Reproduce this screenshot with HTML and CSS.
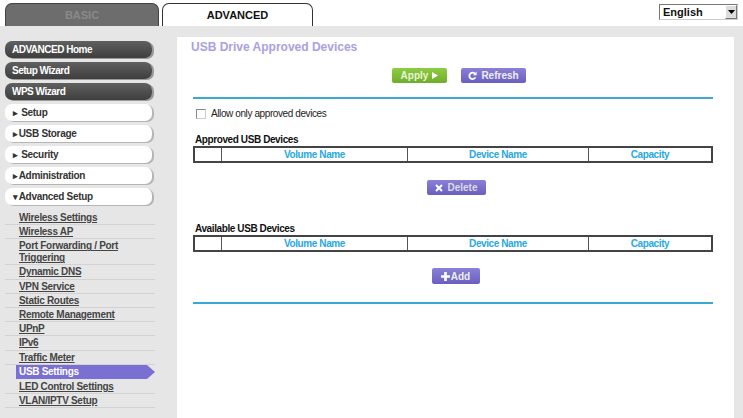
FILE: index.html
```html
<!DOCTYPE html>
<html>
<head>
<meta charset="utf-8">
<link rel="stylesheet" href="styles.css">
</head>
<body>
<div class="top">
  <div class="tab tab-basic">BASIC</div>
  <div class="tab tab-adv">ADVANCED</div>
  <div class="lang"><span>English</span><span class="lang-btn"><svg width="7" height="4" viewBox="0 0 7 4"><path d="M0 0h7L3.5 4z" fill="#000"/></svg></span></div>
</div>
<div class="main">
  <div class="side">
    <div class="dbtn">ADVANCED Home</div>
    <div class="dbtn">Setup Wizard</div>
    <div class="dbtn">WPS Wizard</div>
    <div class="wbtn"><span class="tri">&#9656;</span> Setup</div>
    <div class="wbtn"><span class="tri">&#9656;</span>USB Storage</div>
    <div class="wbtn"><span class="tri">&#9656;</span> Security</div>
    <div class="wbtn"><span class="tri">&#9656;</span>Administration</div>
    <div class="wbtn"><span class="tri">&#9662;</span>Advanced Setup</div>
    <ul class="sub">
      <li><a>Wireless Settings</a></li>
      <li><a>Wireless AP</a></li>
      <li class="two"><a>Port Forwarding / Port Triggering</a></li>
      <li><a>Dynamic DNS</a></li>
      <li><a>VPN Service</a></li>
      <li><a>Static Routes</a></li>
      <li><a>Remote Management</a></li>
      <li><a>UPnP</a></li>
      <li><a>IPv6</a></li>
      <li><a>Traffic Meter</a></li>
      <li class="active"><a>USB Settings</a></li>
      <li><a>LED Control Settings</a></li>
      <li><a>VLAN/IPTV Setup</a></li>
    </ul>
  </div>
  <div class="panel">
    <h1 class="title">USB Drive Approved Devices</h1>
    <div class="actions">
      <div class="btn green">Apply <svg width="6" height="7" viewBox="0 0 6 7"><path d="M0 0l6 3.5L0 7z" fill="#fff"/></svg></div>
      <div class="btn purple"><svg width="9" height="9" viewBox="0 0 10 10"><path d="M8 3.2A3.6 3.6 0 1 0 8.3 7" fill="none" stroke="#fff" stroke-width="2"/><path d="M9.6 0.6v4H5.6z" fill="#fff"/></svg> Refresh</div>
    </div>
    <div class="rule"></div>
    <label class="check"><span class="box"></span>Allow only approved devices</label>
    <div class="sect">Approved USB Devices</div>
    <table class="tbl">
      <tr><th class="c0"></th><th class="c1">Volume Name</th><th class="c2">Device Name</th><th class="c3">Capacity</th></tr>
    </table>
    <div class="center c-del"><div class="btn purple del"><svg width="8" height="8" viewBox="0 0 8 8"><path d="M1 1l6 6M7 1L1 7" stroke="#fff" stroke-width="2"/></svg> Delete</div></div>
    <div class="sect sect2">Available USB Devices</div>
    <table class="tbl">
      <tr><th class="c0"></th><th class="c1">Volume Name</th><th class="c2">Device Name</th><th class="c3">Capacity</th></tr>
    </table>
    <div class="center c-add"><div class="btn purple add"><svg width="9" height="9" viewBox="0 0 9 9"><path d="M4.5 0v9M0 4.5h9" stroke="#fff" stroke-width="2.6"/></svg>Add</div></div>
    <div class="rule rule2"></div>
  </div>
</div>
</body>
</html>
```
FILE: styles.css
```css
html, body { margin: 0; padding: 0; }
body {
  width: 743px;
  height: 418px;
  overflow: hidden;
  font-family: "Liberation Sans", Arial, sans-serif;
  background: #fff;
}
.top {
  height: 26px;
  display: flex;
  align-items: flex-end;
  padding-left: 5px;
  position: relative;
}
.tab {
  box-sizing: border-box;
  height: 23px;
  border-radius: 7px 7px 0 0;
  font-weight: bold;
  font-size: 11px;
  text-align: center;
  line-height: 22px;
}
.tab-basic {
  width: 154px;
  background: #6d6d6d;
  color: #8a8a8a;
  border: 1px solid #444;
  border-bottom: none;
}
.tab-adv {
  width: 151px;
  margin-left: 3px;
  background: #fff;
  color: #111;
  border: 1px solid #333;
  border-bottom: none;
}
.lang {
  position: absolute;
  left: 659px;
  top: 4px;
  width: 79px;
  height: 16px;
  box-sizing: border-box;
  border: 1px solid #777;
  border-right-color: #ccc;
  border-bottom-color: #ccc;
  font-size: 11px;
  font-weight: bold;
  color: #111;
  line-height: 14px;
  padding-left: 3px;
  display: flex;
  justify-content: space-between;
  background: #fff;
}
.lang-btn {
  width: 12px;
  height: 14px;
  background: #ddd;
  display: flex;
  align-items: center;
  justify-content: center;
  box-sizing: border-box;
  border: 1px solid #fff;
  border-right-color: #777;
  border-bottom-color: #777;
}
.main {
  display: flex;
  background: #e6e6e6;
  height: 392px;
}
.side {
  width: 163px;
  padding-top: 15px;
  box-sizing: border-box;
}
.dbtn, .wbtn {
  width: 147px;
  height: 17px;
  margin-left: 5px;
  margin-bottom: 4px;
  border-radius: 7px;
  box-sizing: border-box;
  font-size: 10px;
  font-weight: bold;
  line-height: 17px;
  padding-left: 7px;
  letter-spacing: -0.5px;
}
.dbtn {
  background: linear-gradient(#606060, #3e3e3e);
  color: #fff;
  box-shadow: 2px 1px 0 #9a9a9a;
}
.wbtn {
  background: #fff;
  color: #333;
  padding-left: 8px;
  box-shadow: 2px 1px 0 #b5b5b5;
  letter-spacing: -0.3px;
}
.tri { font-size: 9px; margin-right: 1px; }
.sub {
  list-style: none;
  margin: 6px 0 0 5px;
  padding: 0;
  width: 150px;
}
.sub li {
  border-bottom: 1px solid #d2d2d2;
  box-sizing: border-box;
  padding-left: 14px;
  font-size: 10px;
  font-weight: bold;
  line-height: 13px;
  height: 14.2px;
  letter-spacing: -0.3px;
}
.sub li a {
  color: #444;
  text-decoration: underline;
}
.sub li.two {
  height: 26px;
  line-height: 12px;
  padding-top: 1px;
  padding-right: 12px;
}
.sub li.active {
  position: relative;
  background: #7a6fd2;
  margin-left: 11px;
  padding-left: 3px;
  width: 131px;
  border-bottom: none;
  margin-bottom: 1px;
}
.sub li.active::after {
  content: "";
  position: absolute;
  right: -8px;
  top: 0;
  border-left: 8px solid #7a6fd2;
  border-top: 7px solid transparent;
  border-bottom: 7px solid transparent;
}
.sub li.active a { color: #fff; text-decoration: none; }
.panel {
  margin-left: 14px;
  margin-top: 11px;
  width: 557px;
  background: #fff;
  padding: 0 21px 0 16px;
  box-sizing: border-box;
}
.title {
  margin: 3px 0 0 -2px;
  font-size: 12px;
  font-weight: bold;
  color: #a9a1e2;
  height: 18px;
}
.actions {
  display: flex;
  gap: 14px;
  padding-left: 199px;
  margin-top: 10px;
}
.btn {
  box-sizing: border-box;
  height: 15px;
  border-radius: 2px;
  color: #fff;
  font-size: 10px;
  font-weight: bold;
  display: flex;
  align-items: center;
  justify-content: center;
  gap: 4px;
}
.green {
  width: 55px;
  background: linear-gradient(#8fcc45, #6fae2a);
  color: #e8f4d8;
}
.purple {
  width: 65px;
  background: linear-gradient(#8a80d8, #6a5fbf);
  color: #eee;
}
.rule {
  height: 2px;
  background: #3ba8d4;
  margin-top: 14px;
}
.check {
  display: flex;
  align-items: center;
  font-size: 10px;
  letter-spacing: -0.4px;
  color: #222;
  margin-top: 9px;
  margin-left: 3px;
}
.box {
  width: 8px;
  height: 8px;
  border: 1px solid #888;
  border-right-color: #ccc;
  border-bottom-color: #ccc;
  margin-right: 5px;
}
.sect {
  font-size: 10px;
  letter-spacing: -0.4px;
  font-weight: bold;
  color: #111;
  margin-top: 14px;
  margin-left: 2px;
  height: 13px;
  line-height: 13px;
}
.sect2 { margin-top: 27px; }
.tbl {
  width: 520px;
  border-collapse: collapse;
  border: 2px solid #444;
  margin-top: 0;
}
.tbl th {
  height: 13px;
  padding: 0;
  border: 1px solid #555;
  border-top: none;
  border-bottom: none;
  font-size: 10px;
  letter-spacing: -0.4px;
  font-weight: bold;
  color: #29a8df;
  line-height: 13px;
}
.c0 { width: 26px; }
.c1 { width: 185px; }
.c2 { width: 180px; }
.center {
  display: flex;
  justify-content: center;
}
.c-del { margin-top: 17px; }
.c-add { margin-top: 16px; }
.del { width: 59px; margin-left: 7px; color: #ddd; }
.add { width: 48px; margin-left: 5px; gap: 1px; height: 16px; }
.rule2 { margin-top: 18px; }
```
